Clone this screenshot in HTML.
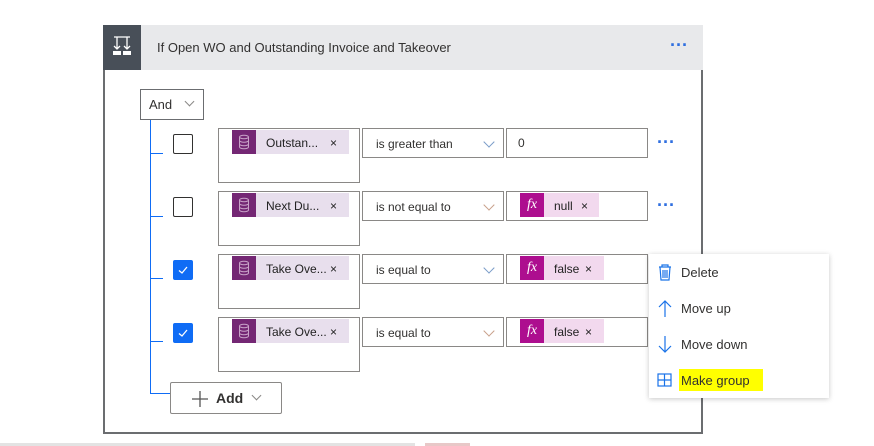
<!DOCTYPE html>
<html><head><style>
*{box-sizing:border-box;margin:0;padding:0}
body{width:874px;height:446px;background:#fff;font-family:"Segoe UI","Liberation Sans",sans-serif;position:relative;overflow:hidden;color:#323130}
.a{position:absolute}
.hdr{left:103px;top:25px;width:600px;height:45px;background:#e8e9eb}
.ic{left:103px;top:25px;width:38px;height:45px;background:#484f58}
.card{left:103px;top:70px;width:600px;height:364px;border:2px solid #6b6d70;border-top:none}
.box{border:1px solid #8a8886;background:#fff}
.tok{height:24px;background:#e8dfed;font-size:12px;line-height:26px;color:#222}
.ti{width:24px;height:24px;background:#742774}
.fx{width:24px;height:24px;background:#ad0e8f;color:#fff;font-family:"Liberation Serif",serif;font-style:italic;font-size:14px;text-align:center;line-height:23px}
.op{font-size:12px;color:#323130;line-height:30px;padding-left:13px}
.chev{position:absolute;right:10px;top:9px;width:8px;height:8px;border-right:1px solid #7a9cc8;border-bottom:1px solid #7a9cc8;transform:rotate(45deg)}
.cb{width:20px;height:20px;border:1px solid #323130;border-radius:2px;background:#fff}
.cbk{background:#0f6cf5;border-color:#0f6cf5}
.dots{color:#2f6fe0;font-size:18px;letter-spacing:0px;font-weight:bold}
.mi{font-size:13px;color:#323130}
</style></head><body>
<div class="a hdr"></div>
<div class="a ic"><svg width="38" height="45"><g stroke="#fff" stroke-width="1.3" fill="none"><path d="M11 12h16M14 12v12M24 12v12M11 21l3 3 3-3M21 21l3 3 3-3"/></g><rect x="10" y="26" width="8" height="4" fill="#fff"/><rect x="20" y="26" width="8" height="4" fill="#fff"/></svg></div>
<div class="a" style="left:157px;top:40px;font-size:13px;color:#323130">If Open WO and Outstanding Invoice and Takeover</div>
<div class="a dots" style="left:670px;top:35px">···</div>
<div class="a card"></div>
<div class="a box" style="left:140px;top:89px;width:64px;height:31px;border-color:#6b6d70"><span class="a" style="left:8px;top:7px;font-size:13px">And</span><span class="a" style="left:45px;top:8px;width:7px;height:7px;border-right:1px solid #8a8886;border-bottom:1px solid #8a8886;transform:rotate(45deg)"></span></div>
<div class="a" style="left:150px;top:120px;width:1px;height:273px;background:#0f6cf5"></div>
<div class="a" style="left:150px;top:153px;width:13px;height:1px;background:#0f6cf5"></div>
<div class="a" style="left:150px;top:216px;width:13px;height:1px;background:#0f6cf5"></div>
<div class="a" style="left:150px;top:278px;width:13px;height:1px;background:#0f6cf5"></div>
<div class="a" style="left:150px;top:341px;width:13px;height:1px;background:#0f6cf5"></div>
<div class="a" style="left:150px;top:393px;width:21px;height:1px;background:#0f6cf5"></div>

<div class="a cb" style="left:173px;top:134px"></div>
<div class="a cb" style="left:173px;top:197px"></div>
<div class="a cb cbk" style="left:173px;top:260px"><svg width="18" height="18"><path d="M5 9.5l3 2.5 5-6" stroke="#fff" stroke-width="1.3" fill="none"/></svg></div>
<div class="a cb cbk" style="left:173px;top:323px"><svg width="18" height="18"><path d="M5 9.5l3 2.5 5-6" stroke="#fff" stroke-width="1.3" fill="none"/></svg></div>

<div class="a box" style="left:218px;top:128px;width:142px;height:55px"></div>
<div class="a box" style="left:218px;top:191px;width:142px;height:55px"></div>
<div class="a box" style="left:218px;top:254px;width:142px;height:55px"></div>
<div class="a box" style="left:218px;top:317px;width:142px;height:55px"></div>

<svg width="0" height="0" style="position:absolute"><defs><g id="db"><ellipse cx="12" cy="7" rx="4.5" ry="1.8" stroke="#c9a3c9" fill="none"/><path d="M7.5 7v10c0 1 2 1.8 4.5 1.8s4.5-.8 4.5-1.8V7M7.5 10.5c0 1 2 1.8 4.5 1.8s4.5-.8 4.5-1.8M7.5 14c0 1 2 1.8 4.5 1.8s4.5-.8 4.5-1.8" stroke="#c9a3c9" fill="none"/></g></defs></svg>
<div class="a tok" style="left:232px;top:130px;width:117px"><div class="a ti"><svg width="24" height="24"><use href="#db"/></svg></div><span class="a" style="left:34px">Outstan...</span><span class="a" style="left:98px">×</span></div>
<div class="a tok" style="left:232px;top:193px;width:117px"><div class="a ti"><svg width="24" height="24"><use href="#db"/></svg></div><span class="a" style="left:34px">Next Du...</span><span class="a" style="left:98px">×</span></div>
<div class="a tok" style="left:232px;top:256px;width:117px"><div class="a ti"><svg width="24" height="24"><use href="#db"/></svg></div><span class="a" style="left:34px">Take Ove...</span><span class="a" style="left:98px">×</span></div>
<div class="a tok" style="left:232px;top:319px;width:117px"><div class="a ti"><svg width="24" height="24"><use href="#db"/></svg></div><span class="a" style="left:34px">Take Ove...</span><span class="a" style="left:98px">×</span></div>

<div class="a box op" style="left:362px;top:128px;width:142px;height:30px">is greater than<span class="chev"></span></div>
<div class="a box op" style="left:362px;top:191px;width:142px;height:30px">is not equal to<span class="chev" style="border-color:#c8a08a"></span></div>
<div class="a box op" style="left:362px;top:254px;width:142px;height:30px">is equal to<span class="chev"></span></div>
<div class="a box op" style="left:362px;top:317px;width:142px;height:30px">is equal to<span class="chev" style="border-color:#c8a08a"></span></div>

<div class="a box" style="left:506px;top:128px;width:142px;height:30px;font-size:12px;line-height:28px;padding-left:11px">0</div>
<div class="a box" style="left:506px;top:191px;width:142px;height:30px"></div>
<div class="a box" style="left:506px;top:254px;width:142px;height:30px"></div>
<div class="a box" style="left:506px;top:317px;width:142px;height:30px"></div>
<div class="a tok" style="left:520px;top:193px;width:79px;background:#f2d9ee"><div class="a fx">fx</div><span class="a" style="left:34px">null</span><span class="a" style="left:61px">×</span></div>
<div class="a tok" style="left:520px;top:256px;width:84px;background:#f2d9ee"><div class="a fx">fx</div><span class="a" style="left:34px">false</span><span class="a" style="left:65px">×</span></div>
<div class="a tok" style="left:520px;top:319px;width:84px;background:#f2d9ee"><div class="a fx">fx</div><span class="a" style="left:34px">false</span><span class="a" style="left:65px">×</span></div>

<div class="a dots" style="left:657px;top:132px">···</div>
<div class="a dots" style="left:657px;top:195px">···</div>

<div class="a box" style="left:170px;top:382px;width:112px;height:32px;border-radius:2px"><svg class="a" style="left:20px;top:7px" width="18" height="18"><path d="M9 1v16M1 9h16" stroke="#555" stroke-width="1.3"/></svg><span class="a" style="left:45px;top:7px;font-size:14px;font-weight:600">Add</span><span class="a" style="left:82px;top:9px;width:7px;height:7px;border-right:1px solid #8a8886;border-bottom:1px solid #8a8886;transform:rotate(45deg)"></span></div>

<div class="a" style="left:649px;top:254px;width:180px;height:144px;background:#fff;box-shadow:0 1px 5px rgba(0,0,0,.22)"></div>
<svg class="a" style="left:656px;top:263px" width="18" height="126" fill="none" stroke="#1a73e8" stroke-width="1.2">
<path d="M3 4h12M6 4V2h6v2M4 4l1 13h8l1-13M7 7v8M9 7v8M11 7v8"/>
<path d="M9 38v16M3 44l6-6 6 6"/>
<path d="M9 73v16M3 83l6 6 6-6"/>
<rect x="2" y="111" width="13" height="12"/><path d="M8.5 111v12M2 117h13"/>
</svg>
<div class="a mi" style="left:681px;top:265px">Delete</div>
<div class="a mi" style="left:681px;top:301px">Move up</div>
<div class="a mi" style="left:681px;top:337px">Move down</div>
<div class="a" style="left:679px;top:369px;width:84px;height:22px;background:#ffff00"></div>
<div class="a mi" style="left:681px;top:373px">Make group</div>

<div class="a" style="left:0;top:443px;width:415px;height:3px;background:#e3e3e3"></div>
<div class="a" style="left:425px;top:443px;width:45px;height:3px;background:#e8c8c8"></div>
</body></html>
